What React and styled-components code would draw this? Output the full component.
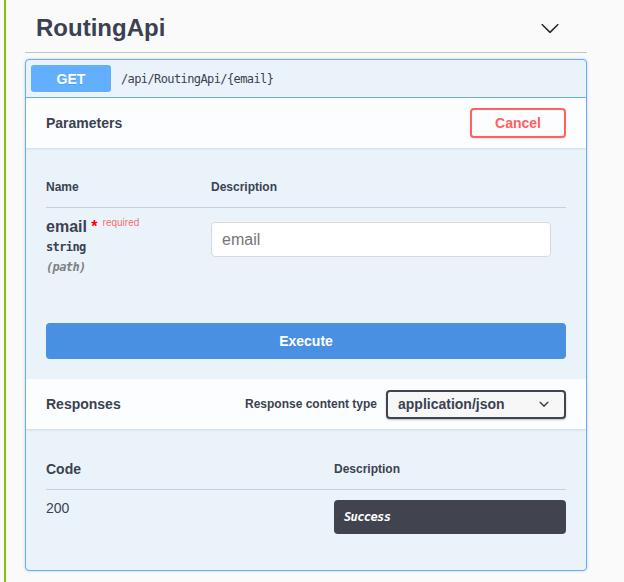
import React from "react";
import styled, { createGlobalStyle } from "styled-components";

const GlobalStyle = createGlobalStyle`
  html, body {
    margin: 0;
    padding: 0;
    background: #fafafa;
  }
  body {
    font-family: "Liberation Sans", Arial, sans-serif;
    color: #3b4151;
  }
  * {
    box-sizing: border-box;
  }
`;

const mono = `"DejaVu Sans Mono", "Liberation Mono", monospace`;

const Page = styled.div`
  min-height: 100vh;
  margin-left: 4px;
  border-left: 2px solid #86c20a;
  padding-left: 19px;
`;

const Section = styled.section`
  width: 562px;
`;

const TagHeader = styled.div`
  display: flex;
  align-items: center;
  justify-content: space-between;
  height: 53px;
  padding: 14px 27px 10px 11px;
  border-bottom: 1px solid rgba(59, 65, 81, 0.3);
`;

const TagTitle = styled.h4`
  margin: 0;
  font-size: 24px;
  line-height: 28px;
  font-weight: 700;
  color: #3b4151;
`;

const Opblock = styled.div`
  margin-top: 6px;
  border: 1px solid #61affe;
  border-radius: 4px;
  background: #ebf3fa;
  box-shadow: 0 0 3px rgba(0, 0, 0, 0.19);
  overflow: hidden;
`;

const Summary = styled.div`
  display: flex;
  align-items: center;
  padding: 5px;
  border-bottom: 1px solid #61affe;
`;

const Method = styled.span`
  display: flex;
  align-items: center;
  justify-content: center;
  width: 80px;
  height: 27px;
  border-radius: 3px;
  background: #61affe;
  color: #fff;
  font-size: 14px;
  font-weight: 700;
  text-shadow: 0 1px 0 rgba(0, 0, 0, 0.1);
`;

const Path = styled.span`
  padding: 0 10px;
  font-family: ${mono};
  font-size: 12px;
  letter-spacing: -0.6px;
  color: #3b4151;
`;

const SectionHeader = styled.div`
  display: flex;
  align-items: center;
  justify-content: space-between;
  height: 50px;
  padding: 0 20px;
  background: rgba(255, 255, 255, 0.8);
  box-shadow: 0 1px 2px rgba(0, 0, 0, 0.1);
  position: relative;
`;

const SectionTitle = styled.h4`
  margin: 0;
  font-size: 14px;
  font-weight: 700;
  color: #3b4151;
`;

const CancelButton = styled.button`
  height: 30px;
  padding: 0 23px;
  border: 2px solid #ff6060;
  border-radius: 4px;
  background: transparent;
  color: #ff6060;
  font-family: inherit;
  font-size: 14px;
  font-weight: 700;
  box-shadow: 0 1px 2px rgba(0, 0, 0, 0.1);
`;

const Body = styled.div`
  padding: ${(p) => p.$pad};
`;

const HeadRow = styled.div`
  display: grid;
  grid-template-columns: ${(p) => p.$cols};
  align-items: center;
  border-bottom: 1px solid rgba(59, 65, 81, 0.2);
`;

const HeadCell = styled.div`
  padding: 12px 0;
  font-size: ${(p) => (p.$big ? "14px" : "12px")};
  line-height: ${(p) => (p.$big ? "16px" : "15px")};
  font-weight: 700;
  color: #3b4151;
`;

const Row = styled.div`
  display: grid;
  grid-template-columns: ${(p) => p.$cols};
  align-items: start;
  padding: ${(p) => p.$pad};
`;

const ParamName = styled.div`
  font-size: 16px;
  line-height: 17px;
  font-weight: 700;
  color: #3b4151;
  white-space: nowrap;
`;

const Star = styled.span`
  color: red;
`;

const Required = styled.span`
  padding-left: 5px;
  font-size: 10px;
  line-height: 0;
  font-weight: 400;
  vertical-align: 6px;
  color: rgba(255, 0, 0, 0.6);
`;

const ParamType = styled.div`
  margin-top: 5px;
  font-family: ${mono};
  font-size: 12px;
  letter-spacing: -0.6px;
  line-height: 14px;
  font-weight: 600;
  color: #3b4151;
`;

const ParamIn = styled.div`
  margin-top: 6px;
  font-family: ${mono};
  font-size: 12px;
  letter-spacing: -0.6px;
  line-height: 14px;
  font-weight: 600;
  font-style: italic;
  color: #808080;
`;

const TextInput = styled.input`
  display: block;
  width: 340px;
  height: 35px;
  margin-top: 4px;
  padding: 8px 10px;
  border: 1px solid #d9d9d9;
  border-radius: 4px;
  background: #fff;
  font-family: inherit;
  font-size: 16px;
  color: #3b4151;
  outline: none;

  &::placeholder {
    color: #757575;
  }
`;

const ExecuteButton = styled.button`
  display: block;
  width: 100%;
  height: 36px;
  margin-top: 40px;
  border: 2px solid #4990e2;
  border-radius: 4px;
  background: #4990e2;
  color: #fff;
  font-family: inherit;
  font-size: 14px;
  font-weight: 700;
`;

const MediaControl = styled.div`
  display: flex;
  align-items: center;
`;

const MediaLabel = styled.span`
  margin-right: 9px;
  font-size: 12px;
  font-weight: 700;
  color: #3b4151;
`;

const Select = styled.div`
  display: flex;
  align-items: center;
  justify-content: space-between;
  width: 180px;
  height: 29px;
  padding: 0 10px;
  border: 2px solid #41444e;
  border-radius: 4px;
  background: #f7f7f7;
  box-shadow: 0 1px 2px 0 rgba(0, 0, 0, 0.25);
  font-size: 14px;
  font-weight: 700;
  color: #3b4151;
`;

const StatusCode = styled.div`
  font-size: 14px;
  line-height: 16px;
  color: #3b4151;
`;

const Markdown = styled.div`
  padding: 10px;
  border-radius: 4px;
  background: #41444e;
  color: #fff;
  font-family: ${mono};
  font-size: 12px;
  letter-spacing: -0.6px;
  line-height: 14px;
  font-weight: 600;
  font-style: italic;
`;

const Chevron = ({ small }) =>
  small ? (
    <svg width="20" height="20" viewBox="0 0 20 20" fill="#41444e">
      <path d="M13.418 7.859a.695.695 0 01.978 0 .68.68 0 010 .969l-3.908 3.83a.697.697 0 01-.979 0l-3.908-3.83a.68.68 0 010-.969.695.695 0 01.978 0L10 11l3.418-3.141z" />
    </svg>
  ) : (
    <svg width="20" height="20" viewBox="0 0 20 20" fill="#222">
      <path d="M17.418 6.109c.272-.268.709-.268.979 0s.271.701 0 .969l-7.908 7.83c-.27.268-.707.268-.979 0l-7.908-7.83c-.27-.268-.27-.701 0-.969.271-.268.709-.268.979 0L10 13.25l7.418-7.141z" />
    </svg>
  );

const App = () => {
  return (
    <>
      <GlobalStyle />
      <Page>
        <Section>
          <TagHeader>
            <TagTitle>RoutingApi</TagTitle>
            <Chevron />
          </TagHeader>

          <Opblock>
            <Summary>
              <Method>GET</Method>
              <Path>/api/RoutingApi/{"{email}"}</Path>
            </Summary>

            <SectionHeader>
              <SectionTitle>Parameters</SectionTitle>
              <CancelButton>Cancel</CancelButton>
            </SectionHeader>

            <Body $pad="20px 20px 20px">
              <HeadRow $cols="165px 1fr">
                <HeadCell>Name</HeadCell>
                <HeadCell>Description</HeadCell>
              </HeadRow>
              <Row $cols="165px 1fr" $pad="10px 0 9px">
                <div>
                  <ParamName>
                    email<Star>&nbsp;*</Star>
                    <Required>required</Required>
                  </ParamName>
                  <ParamType>string</ParamType>
                  <ParamIn>(path)</ParamIn>
                </div>
                <div>
                  <TextInput placeholder="email" />
                </div>
              </Row>
              <ExecuteButton>Execute</ExecuteButton>
            </Body>

            <SectionHeader>
              <SectionTitle>Responses</SectionTitle>
              <MediaControl>
                <MediaLabel>Response content type</MediaLabel>
                <Select>
                  <span>application/json</span>
                  <Chevron small />
                </Select>
              </MediaControl>
            </SectionHeader>

            <Body $pad="20px 20px 26px">
              <HeadRow $cols="288px 1fr">
                <HeadCell $big>Code</HeadCell>
                <HeadCell>Description</HeadCell>
              </HeadRow>
              <Row $cols="288px 1fr" $pad="10px 0">
                <StatusCode>200</StatusCode>
                <Markdown>Success</Markdown>
              </Row>
            </Body>
          </Opblock>
        </Section>
      </Page>
    </>
  );
};

export default App;
